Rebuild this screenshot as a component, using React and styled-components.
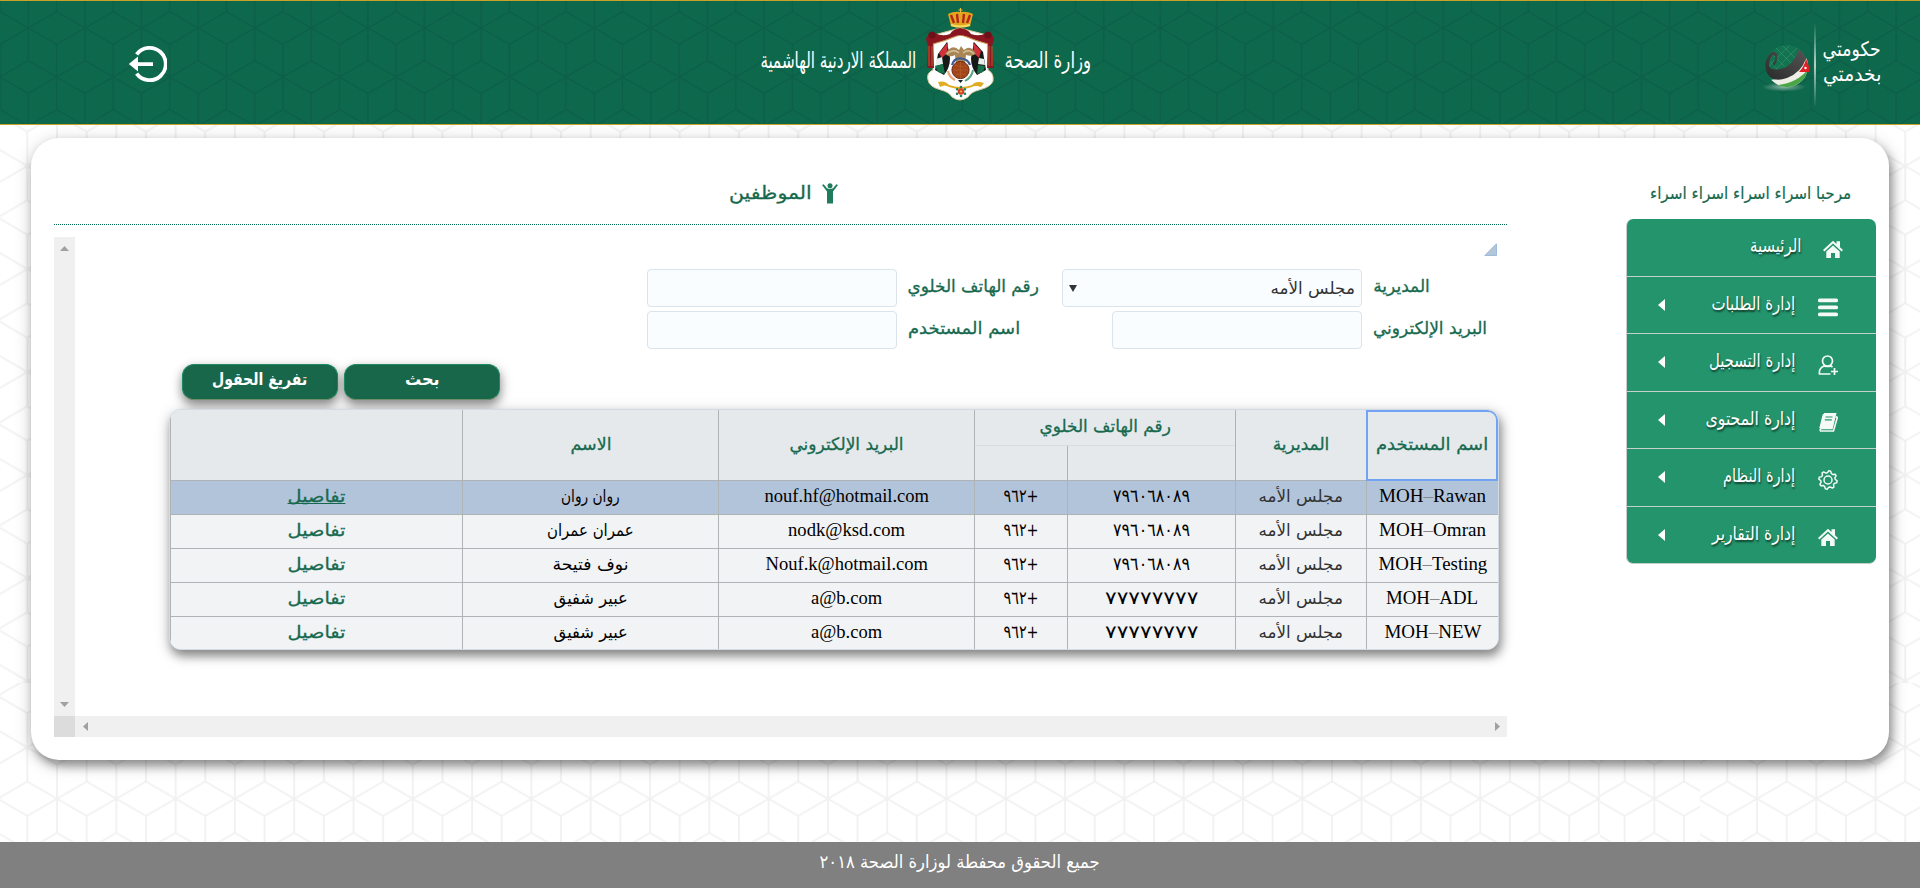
import React, { useLayoutEffect, useRef, useState } from "react";
import styled, { createGlobalStyle } from "styled-components";

const GlobalStyle = createGlobalStyle`
  * { box-sizing: border-box; }
  body { margin: 0; background: #fff; font-family: "DejaVu Sans", sans-serif; }
`;

const sans = `"DejaVu Sans", sans-serif`;
const serif = `"Liberation Serif", "DejaVu Sans", serif`;

/* ---------- text that keeps a set width ---------- */

const FitBox = styled.span`
  display: inline-flex;
  justify-content: center;
  flex: none;
  width: ${(p) => p.$w}px;
  white-space: nowrap;
  direction: ${(p) => (p.$ltr ? "ltr" : "rtl")};
`;
const FitInner = styled.span`
  flex: none;
  display: inline-block;
`;

function Fit({ w, ltr, children }) {
  const ref = useRef(null);
  const [k, setK] = useState(1);
  useLayoutEffect(() => {
    setK(w / ref.current.offsetWidth);
  }, [w, children]);
  return (
    <FitBox $w={w} $ltr={ltr}>
      <FitInner ref={ref} style={{ transform: `scaleX(${k})` }}>{children}</FitInner>
    </FitBox>
  );
}

/* ---------- cube pattern: six-way nodes at the tile's corners and centre ---------- */

function CubePattern({ id, x, y, w, h, color, sw }) {
  const a = h / 6;
  const m = w / 2;
  const d = [
    `M0 0L${m} ${a}L${w} 0`,
    `M0 ${6 * a}L${m} ${5 * a}L${w} ${6 * a}`,
    `M${m} ${a}V${5 * a}`,
    `M0 ${2 * a}L${m} ${3 * a}L${w} ${2 * a}`,
    `M0 ${4 * a}L${m} ${3 * a}L${w} ${4 * a}`,
    `M0 0V${2 * a}M0 ${4 * a}V${6 * a}M${w} 0V${2 * a}M${w} ${4 * a}V${6 * a}`,
  ].join("");
  return (
    <pattern id={id} x={x} y={y} width={w} height={h} patternUnits="userSpaceOnUse">
      <path d={d} fill="none" stroke={color} strokeWidth={sw} />
    </pattern>
  );
}

const Backdrop = styled.svg`
  position: absolute;
  inset: 0;
  z-index: -1;
`;

/* ---------- page ---------- */

const Page = styled.div`
  position: relative;
  z-index: 0;
  width: 1920px;
  height: 888px;
  display: flex;
  flex-direction: column;
  overflow: hidden;
`;

const Header = styled.header`
  position: relative;
  z-index: 0;
  flex: none;
  height: 125px;
  background: #0e684c;
  border-top: 1px solid #c9a227;
  border-bottom: 1px solid #c9a227;
  display: flex;
  align-items: flex-start;
  padding: 0 39px 0 128px;
`;
const LogoutButton = styled.div`
  margin: 44px 593px 0 0;
  width: 39px;
  height: 38px;
  svg { display: block; }
`;
const Brand = styled.div`
  display: flex;
  gap: 9px;
  height: 123px;
  color: #fff;
  font: 23px/30px ${sans};
`;
const BrandText = styled.div`
  display: flex;
  padding-top: 44px;
`;
const EmblemBox = styled.div`
  padding-top: 7px;
  svg { display: block; }
`;
const Egov = styled.div`
  margin-left: auto;
  display: flex;
  color: #fff;
  svg { display: block; }
`;
const EgovLines = styled.div`
  display: flex;
  flex-direction: column;
  padding: 36px 0 0 7px;
  font: 20px/25px ${sans};
`;
const EgovGlobe = styled.div`
  padding-top: 40px;
  width: 52px;
`;
const EgovRule = styled.div`
  margin-top: 22px;
  width: 2px;
  height: 84px;
  background: linear-gradient(transparent, #b5d3c7, transparent);
`;

const Card = styled.main`
  flex: none;
  margin: 13px 0 0 31px;
  width: 1858px;
  height: 622px;
  border-radius: 28px;
  background: #fff;
  box-shadow: 3px 6px 10px rgba(0, 0, 0, 0.34), 1px 4px 18px rgba(0, 0, 0, 0.22);
  display: flex;
  padding-left: 23px;
`;
const Main = styled.section`
  width: 1453px;
`;
const Title = styled.h1`
  margin: 0 0 12px;
  height: 87px;
  border-bottom: 1px dotted #006b4f;
  padding: 41px 0 0 675px;
  display: flex;
  align-items: flex-start;
  gap: 10px;
  font: 18px/28px ${sans};
  color: #17694e;
  -webkit-text-stroke: 0.3px #17694e;
  svg { margin-top: 4px; }
`;

const ScrollPane = styled.div`
  display: grid;
  grid-template-columns: 21px 1fr;
  grid-template-rows: 479px 21px;
`;
const Bar = styled.div`
  background: #f0f0f0;
  display: flex;
  justify-content: space-between;
  align-items: center;
  flex-direction: ${(p) => (p.$vertical ? "column" : "row")};
  padding: ${(p) => (p.$vertical ? "9px 0" : "0 7px 0 8px")};
`;
const Corner = styled.div`
  background: #dcdcdc;
`;

const Content = styled.div`
  display: flex;
  flex-direction: column;
`;
const Expander = styled.div`
  height: 32px;
  display: flex;
  justify-content: flex-end;
  padding: 6px 10px 0 0;
`;
const Form = styled.form`
  display: grid;
  grid-template-columns: 250px 165px 300px 135px;
  grid-auto-rows: 38px;
  row-gap: 4px;
  padding-left: 572px;
`;
const field = `
  height: 38px;
  border: 1px solid #dbe4ea;
  border-radius: 4px;
  background: #f9fdff;
`;
const Input = styled.div`
  ${field}
  width: 250px;
  justify-self: end;
`;
const Select = styled.div`
  ${field}
  display: flex;
  justify-content: space-between;
  align-items: center;
  padding: 0 6px;
  font: 17px/28px ${sans};
  color: #333;
`;
const Label = styled.label`
  padding: 3px 0 0 11px;
  font: 17px/28px ${sans};
  color: #17694e;
  -webkit-text-stroke: 0.3px #17694e;
`;

const Buttons = styled.div`
  display: flex;
  gap: 6px;
  margin: 15px 0 9px 107px;
`;
const Button = styled.button`
  width: 156px;
  height: 36px;
  padding: 0 0 7px;
  border: 1px solid #1d8a63;
  border-bottom-color: #6f8f6c;
  border-radius: 12px;
  background: #18674b;
  color: #fff;
  font: bold 17px/26px ${sans};
  box-shadow: 0 5px 10px rgba(0, 0, 0, 0.36), 1px 4px 14px rgba(0, 0, 0, 0.18);
`;

const Table = styled.div`
  direction: rtl;
  margin-left: 94px;
  width: 1330px;
  border: 1px solid #d2dce6;
  border-radius: 12px;
  overflow: hidden;
  background: #f1f3f5;
  box-shadow: 2px 6px 10px rgba(0, 0, 0, 0.36), 1px 4px 16px rgba(0, 0, 0, 0.22);
`;
const columns = "132px 131px 168px 93px 256px 256px 1fr";
const HeadRow = styled.div`
  display: grid;
  grid-template-columns: ${columns};
  grid-template-rows: 36px 35px;
  background: #e5e9ec;
  color: #17694e;
  font: 17px/28px ${sans};
  -webkit-text-stroke: 0.3px #17694e;
`;
const HeadCell = styled.div`
  display: flex;
  align-items: center;
  justify-content: center;
  padding-bottom: 3px;
  border-left: 1px solid #b0b3b5;
  border-bottom: 1px solid ${(p) => (p.$upper ? "#d6dde1" : "#b0b3b5")};
  grid-column: span ${(p) => p.$cols || 1};
  grid-row: ${(p) => (p.$upper ? "1" : p.$lower ? "2" : "1 / span 2")};
  ${(p) => p.$focus && `border: 0; box-shadow: inset 0 0 0 2px #72a2f2; border-radius: 0 10px 0 0;`}
`;
const Row = styled.div`
  display: grid;
  grid-template-columns: ${columns};
  height: ${(p) => (p.$last ? 32 : 34)}px;
  background: ${(p) => (p.$active ? "#b2c4da" : "#f1f3f5")};
  border-bottom: ${(p) => (p.$last ? 0 : 1)}px solid #b0b3b5;
`;
const Cell = styled.div`
  display: flex;
  align-items: center;
  justify-content: center;
  padding-bottom: 3px;
  border-left: 1px solid #b0b3b5;
  font: ${(p) => (p.$latin ? `18px/28px ${serif}` : `${p.$digits ? 18 : 17}px/28px ${sans}`)};
  color: ${(p) => p.$color || "#000"};
`;
const Dash = styled.span`
  color: #888;
`;
const Link = styled.a`
  display: flex;
  color: #17694e;
  -webkit-text-stroke: 0.3px #17694e;
  span span {
    text-decoration: ${(p) => (p.$on ? "underline" : "none")};
    text-decoration-skip-ink: none;
    text-decoration-thickness: 1px;
  }
`;

const Side = styled.aside`
  margin-left: 119px;
  width: 250px;
`;
const Greeting = styled.div`
  height: 81px;
  padding: 41px 25px 0 0;
  display: flex;
  justify-content: flex-end;
  font: 17px/28px ${sans};
  color: #17694e;
  -webkit-text-stroke: 0.2px #17694e;
`;
const Menu = styled.nav`
  height: 345px;
  display: flex;
  flex-direction: column;
  border: 1px solid #c8cccb;
  border-width: 0 0 1px 1px;
  border-radius: 7px;
  overflow: hidden;
  background: #23946b;
`;
const MenuItem = styled.div`
  flex: 1;
  display: flex;
  align-items: flex-start;
  padding: 12px ${(p) => (p.$plain ? 33 : 38)}px 0 31px;
  gap: ${(p) => (p.$plain ? 22 : 23)}px;
  border-top: ${(p) => (p.$plain ? 0 : 1)}px solid #c6d0cb;
  color: #fff;
  font: 19px/28px ${sans};
  text-shadow: 1px 2px 2px rgba(0, 0, 0, 0.55);
  svg { flex: none; margin-top: 9px; }
  svg:first-child { margin-top: 10px; }
`;
const MenuText = styled.div`
  flex: 1;
  display: flex;
  justify-content: flex-end;
`;

const Footer = styled.footer`
  margin-top: auto;
  height: 46px;
  background: #808080;
  color: #fff;
  display: flex;
  padding: 6px 0 0 820px;
  font: 18px/28px ${sans};
`;

/* ---------- drawings ---------- */

const Tri = ({ dir, w = 9, h = 5, color = "#a0a0a0" }) => {
  const d = {
    up: `M0 ${h}L${w / 2} 0L${w} ${h}Z`,
    down: `M0 0H${w}L${w / 2} ${h}Z`,
    left: `M${w} 0V${h}L0 ${h / 2}Z`,
    right: `M0 0V${h}L${w} ${h / 2}Z`,
  }[dir];
  return <svg width={w} height={h}><path d={d} fill={color} /></svg>;
};

const LogoutIcon = () => (
  <svg width="39" height="38" viewBox="0 0 39 38" fill="none">
    <path d="M8.6 9.3A16.2 16.2 0 1 1 8.6 28.7" stroke="#fff" strokeWidth="3.8" />
    <path d="M.8 19L10 11.5V17.2H25V20.9H10V26.5Z" fill="#fff" />
  </svg>
);

const Emblem = () => (
  <svg width="70" height="94" viewBox="0 0 70 94">
    <path d="M9 27L35 20L62 27L63 62Q69 65 68 73Q66 79 54 82Q46 84 43 89Q35 95 27 89Q24 84 16 82Q4 79 3 72Q1 65 8 62Z" fill="#fff" stroke="#d9c99a" strokeWidth="1" />
    <path d="M35 20Q43 21 46 26Q55 29 61 25Q68 25 69 31L67 38L69 60H62L63 36Q52 33 42 29Q35 26 29 29Q19 33 8 36L9 60H2L3 38L1 31Q3 24 10 25Q17 29 25 26Q28 21 35 20Z" fill="#8c1620" />
    <path d="M4 38V58M7 38V58M64 38V58M67 38V58" stroke="#b76b2a" strokeWidth=".9" />
    <path d="M8 36Q20 33 29 29Q35 26 42 29Q51 33 63 36" fill="none" stroke="#c79a54" strokeWidth="1.2" />
    <circle cx="7" cy="27" r="3.6" fill="#6d101a" /><circle cx="63" cy="27" r="3.6" fill="#6d101a" />
    <path d="M26 18L23 6Q29 3 35 4Q42 3 48 6L45 18Q35 21 26 18Z" fill="#e2a51c" />
    <path d="M26 7L29 15M32 6L33 15M39 6L38 15M45 7L42 15" stroke="#b3261e" strokeWidth="2.4" />
    <path d="M26 17Q35 20 45 17" fill="none" stroke="#f8dc62" strokeWidth="2" />
    <path d="M35.500 0V5M33.500 2H37.500" stroke="#e8bc42" strokeWidth="1.2" />
    <path d="M22 34L13 46L10 62L19 67Q25 60 25 50Z" fill="#151a18" />
    <path d="M23 34L22 45L17 50L14 45Z" fill="#d2303a" />
    <path d="M11 51L17 49L18 56L11 58Z" fill="#e8eeea" /><path d="M10 58L18 56L20 66L13 64Z" fill="#17734b" />
    <path d="M49 34L58 44L61 62L52 67Q46 60 46 50Z" fill="#151a18" />
    <path d="M48 34L49 45L54 50L56 43Z" fill="#d2303a" />
    <path d="M54 50L59 51L60 57L53 56Z" fill="#e8eeea" /><path d="M53 57L60 58L58 64L52 66Z" fill="#17734b" />
    <path d="M20 46Q27 35 34 42L36 38L39 42Q46 36 51 46Q46 49 41 47L40 56H31L30 47Q25 50 20 46Z" fill="#a98655" />
    <path d="M22 46Q28 40 34 45M49 46Q44 40 38 45" fill="none" stroke="#d8c39c" strokeWidth="1.3" />
    <path d="M27 57Q29 50 36 50.500Q43 51 45 57" fill="none" stroke="#3c5a96" strokeWidth="2.200" />
    <circle cx="35.500" cy="62" r="8.600" fill="#a3451b" stroke="#6c2b12" strokeWidth="1" />
    <path d="M30 57Q35 60 42 58M28 62H43M31 67Q36 64 41 67M35.500 54V70" fill="none" stroke="#b95f2c" strokeWidth=".6" />
    <path d="M23 63Q24 69 30 72" fill="none" stroke="#eda27a" strokeWidth="2.200" />
    <path d="M48 62Q47 69 40 73" fill="none" stroke="#58a57f" strokeWidth="2" />
    <path d="M33 72H38L35.500 75Z" fill="#16202c" />
    <path d="M13 74Q20 72 24 77Q36 81 47 77Q51 72 59 75L56 79Q50 77 47 79Q36 83 24 79Q20 76 15 79Z" fill="#dfac22" />
    <g fill="#1d8560">
      {[0, 60, 120, 180, 240, 300].map((t) => (
        <circle key={t} cx="36" cy="79" r="1.300" transform={`rotate(${t} 36 83.500)`} />
      ))}
    </g>
    <circle cx="36" cy="83.500" r="3.300" fill="#d0402a" /><circle cx="36" cy="83.500" r="1.100" fill="#e9b93a" />
  </svg>
);

const Globe = () => (
  <svg width="49" height="52" viewBox="0 0 49 52">
    <defs>
      <radialGradient id="shade"><stop offset="0" stopColor="#b9d3c6" stopOpacity=".7" /><stop offset="1" stopColor="#b9d3c6" stopOpacity="0" /></radialGradient>
      <linearGradient id="band" x1="0" y1="1" x2="1" y2="0"><stop offset="0" stopColor="#2a2a2a" /><stop offset="1" stopColor="#555" /></linearGradient>
      <clipPath id="ball"><circle cx="25" cy="25" r="21" /></clipPath>
    </defs>
    <ellipse cx="22" cy="46" rx="22" ry="4.500" fill="url(#shade)" />
    <g clipPath="url(#ball)">
      <rect width="49" height="52" fill="#11734f" />
      <path d="M6 9L30 33M12 5L36 29M18 2L38 22M2 15L22 35M38 4L10 32M44 8L18 34M30 2L6 26" stroke="#3f9271" strokeWidth=".6" />
      <path d="M8 39Q34 37 46 15V52H8Z" fill="#eeeee6" />
      <path d="M16 44Q36 42 47 27V52H14Z" fill="#4aa547" />
    </g>
    <path d="M37 8Q31 26 18 28Q9 30 7 25Q7 17 11 14Q14 14 13 19Q10 23 11 25Q16 22 15 13Q12 8 7 14Q1 22 5 32Q10 42 25 37Q40 31 44 17Q41 11 37 8Z" fill="url(#band)" />
    <path d="M44 18Q48 25 47 31H37Q42 26 44 18Z" fill="#e02027" />
    <circle cx="43.500" cy="27" r="1.200" fill="#fff" />
  </svg>
);

const PersonIcon = () => (
  <svg width="16" height="21" viewBox="0 0 16 21" fill="#1f7d5b">
    <circle cx="8" cy="2.800" r="2.500" />
    <path d="M0 2L1.600 1.200L5 5.200Q8 6.400 11 5.200L14.400 1.200L16 2L11 8.500V20.500H5V8.500Z" />
  </svg>
);

const HomeIcon = () => (
  <svg width="20" height="19" viewBox="0 0 20 19" fill="#f4faf7">
    <path d="M0 10L10 .8L13.500 4V1.200H17V7.200L20 10L18.600 11.400L10 3.600L1.400 11.400Z" />
    <path d="M3.300 11.500L10 5.400L16.700 11.500V18H12V13H8V18H3.300Z" />
  </svg>
);
const ListIcon = () => (
  <svg width="20" height="19" viewBox="0 0 20 19" fill="#f4faf7">
    <rect y="0.500" width="20" height="3.800" rx="1.600" /><rect y="7.500" width="20" height="3.800" rx="1.600" /><rect y="14.500" width="20" height="3.800" rx="1.600" />
  </svg>
);
const UserIcon = () => (
  <svg width="20" height="20" viewBox="0 0 20 20" fill="none" stroke="#f4faf7" strokeWidth="1.700">
    <circle cx="9.500" cy="6" r="5" />
    <path d="M12.500 19H1.500Q.6 13.300 6 11Q9.500 12 13 11L14.500 12M16.500 13V20M13 16.500H20" />
  </svg>
);
const BookIcon = () => (
  <svg width="20" height="20" viewBox="0 0 20 20">
    <path d="M6 .8H17.500L14 15.500H3.200Q1.500 16.500 2.600 18H15.500L19.300 4.500L18 3.500" fill="none" stroke="#f4faf7" strokeWidth="1.600" />
    <path d="M5.700.8H17.500L14 15H1.300L4.400 2.500Q4.700 1 5.700.8Z" fill="#f4faf7" />
    <path d="M7.500 4H14.500M6.800 6.800H13.800" stroke="#23946b" strokeWidth="1.200" />
  </svg>
);
const GearIcon = () => {
  const pts = [];
  for (let i = 0; i < 32; i++) {
    const r = i % 4 < 2 ? 9.2 : 7.2;
    const t = ((i + 0.5) / 32) * Math.PI * 2;
    pts.push(`${(10 + r * Math.cos(t)).toFixed(2)} ${(10 + r * Math.sin(t)).toFixed(2)}`);
  }
  return (
    <svg width="20" height="20" viewBox="0 0 20 20" fill="none" stroke="#f4faf7" strokeLinejoin="round" strokeWidth="1.500">
      <path d={`M${pts.join("L")}Z`} /><circle cx="10" cy="10" r="4" />
    </svg>
  );
};

/* ---------- data ---------- */

const menu = [
  ["الرئيسية", 51, HomeIcon, true],
  ["إدارة الطلبات", 84, ListIcon],
  ["إدارة التسجيل", 86, UserIcon],
  ["إدارة المحتوى", 90, BookIcon],
  ["إدارة النظام", 72, GearIcon],
  ["إدارة التقارير", 83, HomeIcon],
];

const rows = [
  ["Rawan", 107, "٧٩٦٠٦٨٠٨٩", 77, "nouf.hf@hotmail.com", 165, "روان روان", 59],
  ["Omran", 107, "٧٩٦٠٦٨٠٨٩", 77, "nodk@ksd.com", 117, "عمران عمران", 87],
  ["Testing", 109, "٧٩٦٠٦٨٠٨٩", 77, "Nouf.k@hotmail.com", 163, "نوف فتيحة", 76],
  ["ADL", 92, "٧٧٧٧٧٧٧٧", 93, "a@b.com", 71, "عبير شفيق", 74],
  ["NEW", 97, "٧٧٧٧٧٧٧٧", 93, "a@b.com", 71, "عبير شفيق", 74],
];

export default function App() {
  return (
    <Page>
      <GlobalStyle />
      <Backdrop width="1920" height="888">
        <defs>
          {[["a", 57], ["b", 1654.3], ["c", 1757]].map(([n, x]) => (
            <React.Fragment key={n}>
              <CubePattern id={`top-${n}`} x={x} y={217.5} w={59.3} h={103} color="#f1f1f1" sw={1.8} />
              <CubePattern id={`low-${n}`} x={x} y={798.7} w={59.3} h={102.8} color="#f1f1f1" sw={1.8} />
            </React.Fragment>
          ))}
        </defs>
        {[["a", 0, 1600], ["b", 1600, 100], ["c", 1700, 220]].map(([n, x, w]) => (
          <g key={n}>
            <rect x={x} y="0" width={w} height="683" fill={`url(#top-${n})`} />
            <rect x={x} y="683" width={w} height="205" fill={`url(#low-${n})`} />
          </g>
        ))}
      </Backdrop>

      <Header>
        <Backdrop width="1920" height="123">
          <defs><CubePattern id="head" x={28.3} y={27} w={56.6} h={98} color="#0c5f48" sw={1.5} /></defs>
          <rect width="1920" height="123" fill="url(#head)" />
        </Backdrop>
        <LogoutButton><LogoutIcon /></LogoutButton>
        <Brand>
          <BrandText><Fit w={156}>المملكة الاردنية الهاشمية</Fit></BrandText>
          <EmblemBox><Emblem /></EmblemBox>
          <BrandText><Fit w={87}>وزارة الصحة</Fit></BrandText>
        </Brand>
        <Egov>
          <EgovGlobe><Globe /></EgovGlobe>
          <EgovRule />
          <EgovLines>
            <Fit w={58}>حكومتي</Fit>
            <Fit w={58}>بخدمتي</Fit>
          </EgovLines>
        </Egov>
      </Header>

      <Card>
        <Main>
          <Title><Fit w={83}>الموظفين</Fit><PersonIcon /></Title>
          <ScrollPane>
            <Bar $vertical><Tri dir="up" /><Tri dir="down" /></Bar>
            <Content>
              <Expander>
                <svg width="13" height="13"><path d="M12.500 .8V12.500H.8Z" fill="#b4c6da" stroke="#9dbbdc" /></svg>
              </Expander>
              <Form>
                <Input />
                <Label><Fit w={131}>رقم الهاتف الخلوي</Fit></Label>
                <Select><Tri dir="down" w={8} h={7} color="#333" /><Fit w={84}>مجلس الأمه</Fit></Select>
                <Label><Fit w={57}>المديرية</Fit></Label>
                <Input />
                <Label><Fit w={112}>اسم المستخدم</Fit></Label>
                <Input />
                <Label><Fit w={114}>البريد الإلكتروني</Fit></Label>
              </Form>
              <Buttons>
                <Button><Fit w={95}>تفريغ الحقول</Fit></Button>
                <Button><Fit w={35}>بحث</Fit></Button>
              </Buttons>
              <Table>
                <HeadRow>
                  <HeadCell $focus><Fit w={112}>اسم المستخدم</Fit></HeadCell>
                  <HeadCell><Fit w={57}>المديرية</Fit></HeadCell>
                  <HeadCell $upper $cols={2}><Fit w={131}>رقم الهاتف الخلوي</Fit></HeadCell>
                  <HeadCell><Fit w={114}>البريد الإلكتروني</Fit></HeadCell>
                  <HeadCell><Fit w={41}>الاسم</Fit></HeadCell>
                  <HeadCell />
                  <HeadCell $lower />
                  <HeadCell $lower />
                </HeadRow>
                {rows.map(([user, uw, phone, pw, mail, mw, name, nw], i) => (
                  <Row key={user} $active={i === 0} $last={i === 4}>
                    <Cell $latin><Fit ltr w={uw}>MOH<Dash>–</Dash>{user}</Fit></Cell>
                    <Cell $color="#333"><Fit w={84}>مجلس الأمه</Fit></Cell>
                    <Cell $digits><Fit w={pw}>{phone}</Fit></Cell>
                    <Cell $digits><Fit w={35}>+٩٦٢</Fit></Cell>
                    <Cell $latin><Fit ltr w={mw}>{mail}</Fit></Cell>
                    <Cell><Fit w={nw}>{name}</Fit></Cell>
                    <Cell><Link $on={i === 0}><Fit w={58}>تفاصيل</Fit></Link></Cell>
                  </Row>
                ))}
              </Table>
            </Content>
            <Corner />
            <Bar><Tri dir="left" w={5} h={9} /><Tri dir="right" w={5} h={9} /></Bar>
          </ScrollPane>
        </Main>
        <Side>
          <Greeting><Fit w={201}>مرحبا اسراء اسراء اسراء اسراء</Fit></Greeting>
          <Menu>
            {menu.map(([text, w, Icon, plain]) => (
              <MenuItem key={text} $plain={plain}>
                {!plain && <Tri dir="left" w={7} h={12} color="#fff" />}
                <MenuText><Fit w={w}>{text}</Fit></MenuText>
                <Icon />
              </MenuItem>
            ))}
          </Menu>
        </Side>
      </Card>

      <Footer><Fit w={280}>جميع الحقوق محفطة لوزارة الصحة ٢٠١٨</Fit></Footer>
    </Page>
  );
}
